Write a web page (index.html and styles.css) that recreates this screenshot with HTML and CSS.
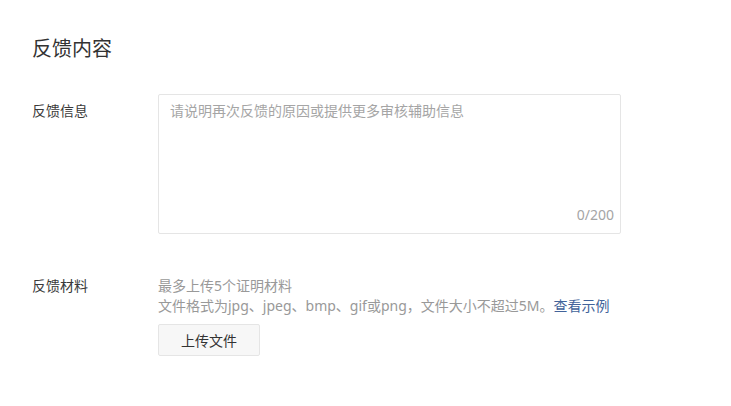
FILE: index.html
```html
<!DOCTYPE html>
<html lang="zh-CN">
<head>
    <meta charset="UTF-8">
    <meta name="viewport" content="width=device-width, initial-scale=1.0">
    <title>反馈内容</title>
    <link rel="stylesheet" href="styles.css">
</head>
<body>

    <div class="page">
        <h2 class="title">反馈内容</h2>

        <div class="form-row">
            <label class="form-label" for="info">反馈信息</label>
            <div class="textarea-box">
                <textarea id="info" placeholder="请说明再次反馈的原因或提供更多审核辅助信息"></textarea>
                <span class="counter">0/200</span>
            </div>
        </div>

        <div class="form-row row-upload">
            <span class="form-label">反馈材料</span>
            <div class="upload">
                <p class="hint">最多上传5个证明材料</p>
                <p class="hint">文件格式为jpg、jpeg、bmp、gif或png，文件大小不超过5M。<a href="#" class="link">查看示例</a></p>
                <button class="upload-button">上传文件</button>
            </div>
        </div>
    </div>

</body>
</html>
```

FILE: styles.css
```css
body {
    margin: 0;
    padding: 0;
    background-color: #fff;
    font-family: "Noto Sans", "Noto Sans CJK SC", sans-serif;
    color: #333;
}

.page {
    padding: 35px 32px 0;
}

.title {
    margin: 0;
    font-size: 20px;
    font-weight: normal;
    line-height: 28px;
    color: #333;
}

.form-row {
    display: flex;
    margin-top: 31px;
}

.form-label {
    width: 126px;
    flex-shrink: 0;
    font-size: 14px;
    line-height: 20px;
    padding-top: 7px;
    color: #3a3a3a;
}

.textarea-box {
    position: relative;
    width: 463px;
    height: 140px;
    border: 1px solid #e5e5e5;
    border-radius: 2px;
    box-sizing: border-box;
}

.textarea-box textarea {
    display: block;
    width: 100%;
    height: 100%;
    border: none;
    outline: none;
    resize: none;
    padding: 6px 11px;
    box-sizing: border-box;
    font-family: inherit;
    font-size: 14px;
    line-height: 20px;
    color: #333;
    background: transparent;
}

.textarea-box textarea::placeholder {
    color: #a5a5a5;
}

.counter {
    position: absolute;
    right: 6px;
    bottom: 8px;
    font-size: 14px;
    line-height: 20px;
    color: #a5a5a5;
}

.row-upload {
    margin-top: 42px;
}

.row-upload .form-label {
    padding-top: 0;
}

.hint {
    margin: 0;
    font-size: 14px;
    line-height: 20px;
    color: #999;
}

.link {
    color: #42639a;
    text-decoration: none;
}

.upload-button {
    margin-top: 8px;
    width: 102px;
    height: 32px;
    background-color: #f7f7f7;
    border: 1px solid #e5e5e5;
    border-radius: 2px;
    font-family: inherit;
    font-size: 14px;
    color: #333;
    cursor: pointer;
}
```
